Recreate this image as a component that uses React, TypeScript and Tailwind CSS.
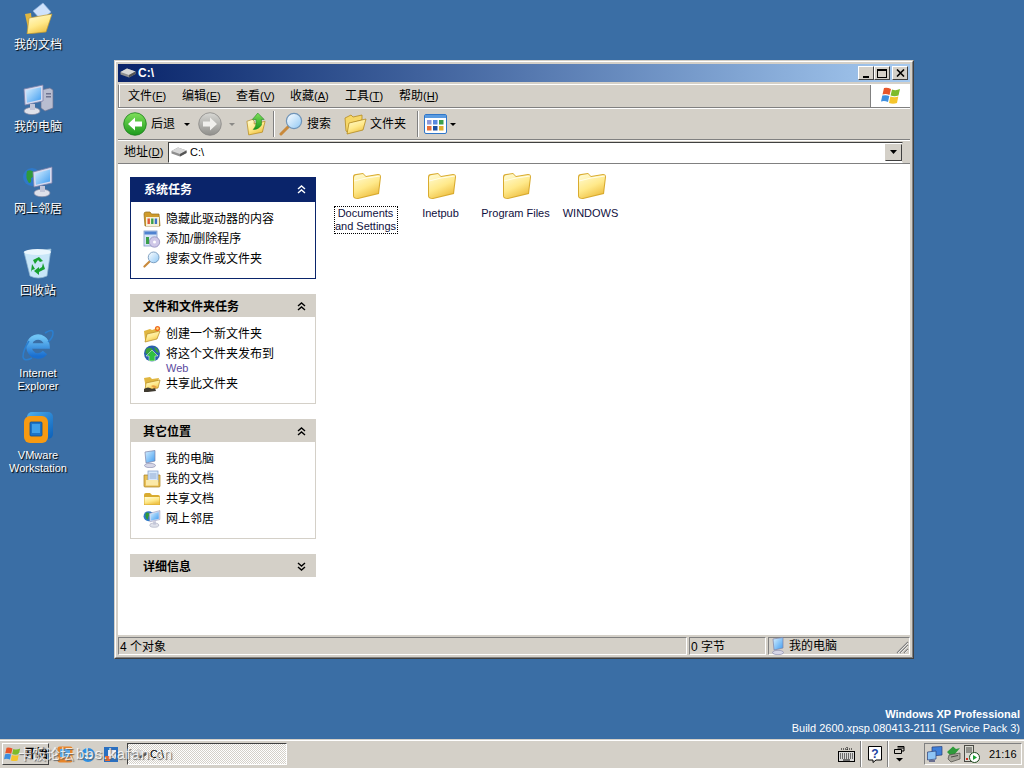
import React from 'react';

const cn = "font-['Liberation_Sans','Noto_Sans_CJK_SC',sans-serif]";

const Defs = () => (
  <svg className="absolute w-0 h-0">
    <defs>
      <linearGradient id="fold" x1="0" y1="0" x2="0.5" y2="1">
        <stop offset="0" stopColor="#fffcd8" />
        <stop offset="0.6" stopColor="#ffe98a" />
        <stop offset="1" stopColor="#f0c44a" />
      </linearGradient>
      <linearGradient id="green" x1="0" y1="0" x2="0" y2="1">
        <stop offset="0" stopColor="#7fe05a" />
        <stop offset="1" stopColor="#1c9a1c" />
      </linearGradient>
      <linearGradient id="gray" x1="0" y1="0" x2="0" y2="1">
        <stop offset="0" stopColor="#d8d8d4" />
        <stop offset="1" stopColor="#908f8b" />
      </linearGradient>
      <linearGradient id="screen" x1="0" y1="0" x2="1" y2="1">
        <stop offset="0" stopColor="#d8f0ff" />
        <stop offset="1" stopColor="#3f9cf0" />
      </linearGradient>
      <linearGradient id="lens" x1="0" y1="0" x2="1" y2="1">
        <stop offset="0" stopColor="#ffffff" />
        <stop offset="1" stopColor="#8fc8f5" />
      </linearGradient>
      <linearGradient id="vm" x1="0" y1="0" x2="1" y2="1">
        <stop offset="0" stopColor="#4fb0ee" />
        <stop offset="1" stopColor="#0b5fb8" />
      </linearGradient>
      <linearGradient id="ie" x1="0" y1="0" x2="0" y2="1">
        <stop offset="0" stopColor="#6fc4f5" />
        <stop offset="1" stopColor="#1a6fd0" />
      </linearGradient>
    </defs>
  </svg>
);

const Folder = ({ size = 32 }: { size?: number }) => (
  <svg width={size} height={size} viewBox="0 0 32 32">
    <path d="M3 8 Q3 5 6 5 L13 4 L16 7 L28 5 Q31 5 31 8 L29 25 L8 30 Q3 30 3 27 Z" fill="#d9ab2f" />
    <path d="M4 9 Q4 6 7 6 L13 5 L16 8 L28 6 Q30 6 30 8 L28 24 L8 29 Q4 29 4 27 Z" fill="url(#fold)" />
    <path d="M4 12 L16 9 L30 7" fill="none" stroke="#fffde8" strokeWidth="1" />
  </svg>
);

const OpenFolder = ({ size = 24 }: { size?: number }) => (
  <svg width={size} height={size} viewBox="0 0 24 24">
    <path d="M2 6 L8 3 L10 5 L19 3 L19 8 L8 11 L6 21 L3 19 Z" fill="#f6d768" stroke="#b48a20" strokeWidth="0.8" />
    <path d="M6 11 L23 7 L20 18 L4 22 Z" fill="url(#fold)" stroke="#b48a20" strokeWidth="0.8" />
  </svg>
);

const Drive = () => (
  <svg width="16" height="10" viewBox="0 0 16 10">
    <path d="M0.5 4 L7 0.5 L15.5 3.5 L15.5 6 L9 9.5 L0.5 6.5 Z" fill="#8f8f8f" />
    <path d="M0.5 4 L7 0.5 L15.5 3.5 L9 7 Z" fill="#d8d8d8" />
    <path d="M9 7 L15.5 3.5 L15.5 6 L9 9.5 Z" fill="#555555" />
  </svg>
);

const Nav = ({ on }: { on: boolean }) => (
  <svg width="24" height="24" viewBox="0 0 24 24">
    <circle cx="12" cy="12" r="11.3" fill={on ? 'url(#green)' : 'url(#gray)'} stroke={on ? '#1d7f1d' : '#8a8986'} strokeWidth="0.8" />
    {on ? (
      <path d="M5 12 L12 5.5 L12 9.5 L19 9.5 L19 14.5 L12 14.5 L12 18.5 Z" fill="#fff" />
    ) : (
      <path d="M19 12 L12 5.5 L12 9.5 L5 9.5 L5 14.5 L12 14.5 L12 18.5 Z" fill="#f0efec" />
    )}
  </svg>
);

const UpFolder = () => (
  <svg width="20" height="24" viewBox="0 0 22 26">
    <path d="M1 10 L7 8 L9 10 L9 13 L21 10 L18 22 L3 25 Z" fill="url(#fold)" stroke="#b48a20" strokeWidth="0.8" />
    <path d="M13 1 L20 8 L17 8 L17 14 Q14 19 8 19 Q12 15 11 8 L7 8 Z" fill="url(#green)" stroke="#1d7f1d" strokeWidth="0.6" />
  </svg>
);

const Lens = ({ size = 24 }: { size?: number }) => (
  <svg width={size} height={size} viewBox="0 0 24 24">
    <path d="M10 14 L2 22" stroke="#c98a3c" strokeWidth="3" strokeLinecap="round" />
    <circle cx="15" cy="9" r="7.6" fill="url(#lens)" stroke="#6f94b8" strokeWidth="1.2" />
  </svg>
);

const Views = () => (
  <svg width="23" height="20" viewBox="0 0 23 20">
    <rect x="0.5" y="0.5" width="22" height="19" rx="1.5" fill="#fff" stroke="#2f76c8" />
    <rect x="1" y="1" width="21" height="3" fill="#5a9be0" />
    {[['#8f9ad8', 3, 6], ['#5a8ae0', 9, 6], ['#3aa04a', 15, 6], ['#e8703a', 3, 12], ['#1c4fa0', 9, 12], ['#e0b030', 15, 12]].map(([c, x, y], i) => (
      <rect key={i} x={x as number} y={y as number} width="4.5" height="4.5" fill={c as string} />
    ))}
  </svg>
);

const Flag = ({ size = 20 }: { size?: number }) => (
  <svg width={size} height={size} viewBox="0 0 20 20">
    <path d="M3 2 Q6 1 10 3 L8.5 9 Q5 7.5 1.5 8.5 Z" fill="#e8562a" />
    <path d="M11 3.5 Q15 5 19 3 L17.5 9.5 Q13.5 11 9.6 9.5 Z" fill="#7dbb2a" />
    <path d="M1.3 9.6 Q5 8.5 8.3 10 L7 16 Q3.5 14.5 0 15.5 Z" fill="#3d8fe0" />
    <path d="M9.3 10.5 Q13.5 12 17.3 10.6 L16 17 Q12 18.5 8 17 Z" fill="#f5c52c" />
  </svg>
);

const Computer = ({ size = 32 }: { size?: number }) => (
  <svg width={size} height={size} viewBox="0 0 32 32">
    <path d="M19 6 L28 4 L31 6 L31 24 L23 27 L19 24 Z" fill="#b9bdd0" stroke="#6f7390" strokeWidth="0.7" />
    <rect x="24" y="9" width="5" height="1.5" fill="#6f7390" />
    <rect x="24" y="12" width="5" height="1.5" fill="#6f7390" />
    <path d="M2 5 L21 1 L21 17 L3 21 Z" fill="#d6dbf0" stroke="#7d82a8" strokeWidth="0.8" />
    <path d="M4 6.5 L19 3.2 L19 15.5 L5 18.8 Z" fill="url(#screen)" />
    <ellipse cx="10" cy="27" rx="8" ry="3.6" fill="#dfe1ea" stroke="#8286a0" strokeWidth="0.7" />
    <rect x="8" y="20" width="5" height="6" fill="#c3c6d8" />
  </svg>
);

const Network = ({ size = 32 }: { size?: number }) => (
  <svg width={size} height={size} viewBox="0 0 32 32">
    <circle cx="10" cy="11" r="9" fill="#2f79c9" />
    <path d="M5 5 Q10 3 12 7 Q13 11 9 12 Q10 17 7 17 Q3 12 5 5 Z" fill="#2f9a3a" />
    <path d="M11 6 L30 1 L30 17 L12 21 Z" fill="#d6dbf0" stroke="#7d82a8" strokeWidth="0.8" />
    <path d="M13 7.5 L28 3.5 L28 15.5 L14 18.8 Z" fill="url(#screen)" />
    <ellipse cx="20" cy="27" rx="8" ry="3.8" fill="#dfe1ea" stroke="#8286a0" strokeWidth="0.7" />
    <rect x="18" y="20" width="5" height="6" fill="#c3c6d8" />
  </svg>
);

const Recycle = () => (
  <svg width="30" height="32" viewBox="0 0 30 32">
    <path d="M1 4 L28 1 L24 28 Q15 32 7 28 Z" fill="#c8e6f8" stroke="#8fb4d0" strokeWidth="0.7" />
    <ellipse cx="14.5" cy="4" rx="13.5" ry="3" fill="#eaf6fd" />
    <path d="M10 12 L16 9 L20 13 L17 14 L15 12 L12 16 Z M20 15 L22 21 L16 24 L16 27 L11 23 L16 19 L16 21 L19 19 Z M9 16 L12 21 L9 22 L8 24 Z" fill="#18a030" />
  </svg>
);

const Ie = () => (
  <svg width="32" height="34" viewBox="0 0 32 34">
    <path d="M8 18 H25 A9 9.5 0 1 0 23 24.5" fill="none" stroke="url(#ie)" strokeWidth="5.5" />
    <path d="M23 5 Q31 0 31 5 Q31 10 26 14" fill="none" stroke="#2b7fd0" strokeWidth="1.5" />
    <path d="M7 13 Q1 22 1 29 Q2 34 10 30" fill="none" stroke="#2b7fd0" strokeWidth="1.5" />
  </svg>
);

const VMware = () => (
  <svg width="30" height="32" viewBox="0 0 30 32">
    <rect x="4" y="0" width="26" height="27" rx="5" fill="url(#vm)" />
    <rect x="1" y="4" width="24" height="27" rx="6" fill="#f79a12" />
    <rect x="7" y="10" width="12" height="14" rx="1" fill="#1d74c8" stroke="#0b4f98" strokeWidth="0.8" />
    <rect x="9" y="12" width="8" height="9" fill="#3fa0ea" />
  </svg>
);

const DocFolder = ({ size = 32 }: { size?: number }) => (
  <svg width={size} height={size} viewBox="0 0 32 32">
    <path d="M3 12 L9 11 L11 30 L7 31 Z" fill="#e0b640" />
    <path d="M11 9 L21 1 L29 10 L19 18 Z" fill="#cfe2fb" stroke="#8eb0dc" strokeWidth="0.7" />
    <path d="M7 16 L30 12 L24 30 L5 32 Z" fill="url(#fold)" stroke="#c09a30" strokeWidth="0.7" />
  </svg>
);

const DriveFolder = () => (
  <svg width="18" height="18" viewBox="0 0 18 18">
    <path d="M1 4 Q1 2 3 2 L7 2 L8.5 4 L16 4 L17 16 L2 16 Z" fill="#cf9b2c" stroke="#8f6b1a" strokeWidth="0.7" />
    <rect x="3" y="7" width="13" height="9" fill="#f6f1d8" />
    {['#e05a3a', '#3aa04a', '#3d72c8'].map((c, i) => (
      <rect key={i} x={4.5 + i * 3.6} y="8.5" width="2.4" height="5.5" fill={c} />
    ))}
  </svg>
);

const AddRemove = () => (
  <svg width="18" height="18" viewBox="0 0 18 18">
    <rect x="1" y="1" width="13" height="15" fill="#d7e4f7" stroke="#7f9ac8" strokeWidth="0.8" />
    <rect x="1.5" y="1.5" width="12" height="3" fill="#4f82d0" />
    <circle cx="11.5" cy="12" r="5.2" fill="#cfc8e8" stroke="#8a86b8" strokeWidth="0.7" />
    <circle cx="11.5" cy="12" r="1.5" fill="#fff" />
    <rect x="3" y="7" width="3" height="7" fill="#3aa04a" />
  </svg>
);

const NewFolder = () => (
  <svg width="18" height="18" viewBox="0 0 18 18">
    <path d="M1 6 L7 4 L9 5 L15 3 L15 7 L5 9 L3 16 L2 15 Z" fill="#e0b640" />
    <path d="M4 9 L17 6 L14 14 L2 17 Z" fill="url(#fold)" stroke="#b48a20" strokeWidth="0.7" />
    <circle cx="14.5" cy="3.5" r="2.6" fill="#f06a20" />
    <circle cx="14.5" cy="3.5" r="1.2" fill="#ffe080" />
  </svg>
);

const Publish = () => (
  <svg width="18" height="18" viewBox="0 0 18 18">
    <circle cx="9" cy="8.5" r="8" fill="#2a5fb0" />
    <path d="M3 4 Q8 1 10 5 Q9 8 6 8 Q4 10 2.5 8 Z M11 2 Q15 3 16 8 L13 7 Z" fill="#39a03c" />
    <path d="M9 5 L15 11 L12 11 L12 16 L6 16 L6 11 L3 11 Z" fill="#30c040" stroke="#fff" strokeWidth="0.5" />
  </svg>
);

const ShareFolder = () => (
  <svg width="18" height="18" viewBox="0 0 18 18">
    <path d="M1 3 L7 2 L9 4 L16 3 L15 7 L5 8 L3 13 Z" fill="#e0b640" />
    <path d="M3 8 L17 5 L15 13 L2 15 Z" fill="url(#fold)" stroke="#b48a20" strokeWidth="0.7" />
    <path d="M1 14 Q5 11 9 14 L12 13 L13 16 L5 17 L1 17 Z" fill="#3f3a30" />
    <path d="M8 11 Q11 9 14 12 L12 13.5 Z" fill="#e8a040" />
  </svg>
);

const SmallMachine = () => (
  <svg width="14" height="18" viewBox="0 0 14 18">
    <path d="M2 2 L12 0.5 L12 11 L3 13 Z" fill="url(#screen)" stroke="#7d82a8" strokeWidth="0.7" />
    <ellipse cx="7" cy="15.5" rx="5.5" ry="2.2" fill="#d6d6e6" stroke="#7d82a8" strokeWidth="0.6" />
  </svg>
);

const DocsSmall = () => (
  <svg width="18" height="18" viewBox="0 0 18 18">
    <path d="M1 5 L1 16 Q1 17 2 17 L16 17 Q17 17 17 16 L17 5 Z" fill="#e8bf55" stroke="#a87f20" strokeWidth="0.7" />
    <rect x="5" y="1" width="10" height="11" fill="#d8e8fb" stroke="#7f9ac8" strokeWidth="0.7" />
    <path d="M6.5 4 H13.5 M6.5 6 H13.5 M6.5 8 H13.5" stroke="#7f9ac8" strokeWidth="0.8" />
    <rect x="3" y="10" width="12" height="5.5" fill="#fbe9a8" />
  </svg>
);

const SharedSmall = () => (
  <svg width="18" height="18" viewBox="0 0 18 18">
    <path d="M1 5 Q1 3 3 3 L7 3 L9 5 L15 5 Q17 5 17 7 L17 15 L1 15 Z" fill="#d9ab2f" />
    <rect x="1.5" y="7" width="15" height="7.5" fill="url(#fold)" />
  </svg>
);

const Keyboard = () => (
  <svg width="17" height="15" viewBox="0 0 17 15">
    <path d="M9 0 V3 M3 2 H14" stroke="#000" strokeWidth="1" strokeDasharray="1 1" />
    <rect x="0.5" y="4.5" width="16" height="10" fill="#d8d8d8" stroke="#000" />
    <path d="M2 7 H15 M2 9 H15 M2 11 H15" stroke="#000" strokeWidth="1" strokeDasharray="1 1" />
    <path d="M5 13 H12" stroke="#000" />
  </svg>
);

const Help = () => (
  <svg width="16" height="17" viewBox="0 0 16 17">
    <path d="M1.5 0.5 H14.5 V14 H9 L6 16.5 V14 H1.5 Z" fill="#fff" stroke="#000" />
    <text x="8" y="11.5" fontSize="12" fontWeight="700" textAnchor="middle" fill="#1c3fa0" fontFamily="'Liberation Sans', sans-serif">?</text>
  </svg>
);

const Restore = () => (
  <svg width="11" height="16" viewBox="0 0 11 16">
    <path d="M3.5 0.5 H10 V5 H8 M0.5 3.5 H7.5 V7.5 H0.5 Z M3.5 2 H10" fill="none" stroke="#000" />
    <path d="M2 12 H9 L5.5 15.5 Z" fill="#000" />
  </svg>
);

const TrayNet = () => (
  <svg width="16" height="17" viewBox="0 0 16 17">
    <path d="M5 1 L15 0.5 L15 9 L5 10 Z" fill="#3f7fd8" stroke="#2a3f78" strokeWidth="0.7" />
    <path d="M0.5 6 L9 5 L9 13 L0.5 14 Z" fill="#8ec4f5" stroke="#2a3f78" strokeWidth="0.7" />
    <rect x="2" y="14" width="6" height="2" fill="#6a6f90" />
  </svg>
);

const TrayTool = () => (
  <svg width="15" height="17" viewBox="0 0 15 17">
    <path d="M1 6 L7 0.5 L10 3 L14 2 L9 8 L4 9 Z" fill="#2f9a3a" />
    <path d="M3 9 L14 7 L14 13 L5 16 L2 13 Z" fill="#a8a69c" stroke="#4a4a44" strokeWidth="0.7" />
    <path d="M5 11 L12 9.5" stroke="#4a4a44" />
  </svg>
);

const TrayServer = () => (
  <svg width="16" height="18" viewBox="0 0 16 18">
    <rect x="0.5" y="0.5" width="9" height="16" fill="#d8d8d0" stroke="#4a4a44" />
    <path d="M2 3 H8 M2 5 H8 M2 7 H8" stroke="#4a4a44" />
    <rect x="2" y="13" width="2" height="2" fill="#d03020" />
    <circle cx="10.5" cy="12.5" r="5" fill="#fff" stroke="#1c4a1c" />
    <path d="M9 10 L13 12.5 L9 15 Z" fill="#18a030" />
  </svg>
);

const QuickIcon = ({ kind }: { kind: string }) => {
  if (kind === 'a') {
    return (
      <svg width="16" height="17" viewBox="0 0 16 17">
        <rect x="0.5" y="0.5" width="15" height="16" rx="2" fill="#e8862a" />
        <rect x="3" y="3" width="10" height="8" fill="#5aa8e8" />
      </svg>
    );
  }
  if (kind === 'b') {
    return (
      <svg width="16" height="17" viewBox="0 0 16 17">
        <circle cx="8" cy="9" r="7" fill="#2d8fe3" />
        <path d="M4 8 H12 M5 11 Q8 14 12 11" stroke="#fff" strokeWidth="1.6" fill="none" />
      </svg>
    );
  }
  return (
    <svg width="16" height="17" viewBox="0 0 16 17">
      <rect x="1" y="1" width="14" height="15" fill="#2a6fc0" />
      <rect x="5" y="4" width="8" height="8" fill="#e8e8f0" />
      <rect x="2" y="10" width="5" height="5" fill="#e86a30" />
    </svg>
  );
};

const Chevrons = ({ down }: { down?: boolean }) => (
  <svg width="9" height="9" viewBox="0 0 9 9" className={down ? 'rotate-180' : ''}>
    <path d="M1 4 L4.5 1 L8 4 M1 8 L4.5 5 L8 8" fill="none" stroke="currentColor" strokeWidth="1.4" />
  </svg>
);

const Key = ({ label, k }: { label: string; k: string }) => (
  <span>
    {label}
    <span className="text-[11px]">
      (<u>{k}</u>)
    </span>
  </span>
);

const desktopIcons = [
  { lines: ['我的文档'], icon: <DocFolder /> },
  { lines: ['我的电脑'], icon: <Computer /> },
  { lines: ['网上邻居'], icon: <Network /> },
  { lines: ['回收站'], icon: <Recycle /> },
  { lines: ['Internet', 'Explorer'], icon: <Ie /> },
  { lines: ['VMware', 'Workstation'], icon: <VMware /> },
];

const menus = [
  ['文件', 'F', 'w-[54px]'],
  ['编辑', 'E', 'w-[54px]'],
  ['查看', 'V', 'w-[54px]'],
  ['收藏', 'A', 'w-[55px]'],
  ['工具', 'T', 'w-[54px]'],
  ['帮助', 'H', 'w-[54px]'],
];

const folders = ['Documents and Settings', 'Inetpub', 'Program Files', 'WINDOWS'];

const DesktopIcon = ({ lines, icon }: { lines: string[]; icon: React.ReactNode }) => (
  <div className="h-[82px] w-[76px] flex flex-col items-center">
    <div className="h-[34px] flex items-end">{icon}</div>
    <div
      className={`mt-[4px] text-white leading-[13px] text-center pt-[1px] [text-shadow:1px_1px_1px_#000] ${
        lines.length > 1 ? 'text-[11px]' : 'text-[12px]'
      }`}
    >
      {lines.map((l) => (
        <div key={l}>{l}</div>
      ))}
    </div>
  </div>
);

const TaskPane = ({
  title,
  primary,
  body,
  down,
  children,
}: {
  title: string;
  primary?: boolean;
  body?: string;
  down?: boolean;
  children?: React.ReactNode;
}) => (
  <div className="w-[186px]">
    <div
      className={`flex items-center justify-between pr-[10px] text-[12px] font-bold ${
        primary ? 'pl-[14px] h-[25px] bg-[#0a246a] text-white' : 'pl-[13px] pt-[2px] h-[23px] bg-[#d4d0c8] text-black'
      }`}
    >
      <span>{title}</span>
      <Chevrons down={down} />
    </div>
    {children && (
      <div
        className={`${body} border border-t-0 bg-white flex flex-col pl-[12px] ${
          primary ? 'border-[#0a246a]' : 'border-[#d4d0c8]'
        }`}
      >
        {children}
      </div>
    )}
  </div>
);

const TaskRow = ({ icon, text, sub }: { icon: React.ReactNode; text: string; sub?: string }) => (
  <div className="flex text-[12px] leading-[20px] text-black">
    <div className="w-[23px] h-[20px] flex items-center">{icon}</div>
    <div>
      <div>{text}</div>
      {sub && <div className="text-[11px] leading-[10px] -mt-[1px] pb-[1px] text-[#5b4a9e]">{sub}</div>}
    </div>
  </div>
);

const Sep = () => <div className="w-[2px] h-[26px] border-l border-r border-l-[#808080] border-r-white" />;

export default function App() {
  return (
    <div className={`${cn} w-[1024px] h-[768px] overflow-hidden flex flex-col bg-[#3a6ea5] select-none`}>
      <Defs />
      <div className="relative flex-1">
        <div className="flex flex-col">
          {desktopIcons.map((d) => (
            <DesktopIcon key={d.lines[0]} {...d} />
          ))}
        </div>

        {/* explorer window */}
        <div className="absolute left-[114px] top-[60px] w-[800px] h-[599px] border border-[#d4d0c8] border-r-[#404040] border-b-[#404040]">
          <div className="w-full h-full border border-white border-r-[#808080] border-b-[#808080] bg-[#d4d0c8] p-[2px] flex flex-col">
            <div className="h-[18px] shrink-0 flex items-center justify-between pl-[2px] pr-[2px] bg-gradient-to-r from-[#0a246a] to-[#a6caf0]">
              <div className="flex items-center gap-[2px] text-white text-[12px] font-bold">
                <Drive />
                <span>C:\</span>
              </div>
              <div className="flex">
                <div className="w-[16px] h-[14px] bg-[#d4d0c8] border border-white border-r-[#404040] border-b-[#404040] flex items-end justify-center pb-[1px]">
                  <div className="w-[6px] h-[2px] bg-black" />
                </div>
                <div className="w-[16px] h-[14px] bg-[#d4d0c8] border border-white border-r-[#404040] border-b-[#404040] flex items-center justify-center">
                  <div className="w-[10px] h-[9px] border border-black border-t-2" />
                </div>
                <div className="ml-[2px] w-[16px] h-[14px] bg-[#d4d0c8] border border-white border-r-[#404040] border-b-[#404040] flex items-center justify-center">
                  <svg width="9" height="8" viewBox="0 0 9 8">
                    <path d="M1 0.5 L8 7.5 M8 0.5 L1 7.5" stroke="#000" strokeWidth="1.6" />
                  </svg>
                </div>
              </div>
            </div>

            {/* menu bar */}
            <div className="mt-[2px] h-[24px] shrink-0 flex border-t border-t-white border-b border-b-[#808080] border-l border-l-[#808080]">
              <div className="flex-1 flex items-center pl-[8px] text-[12px] text-black border-l border-l-white">
                {menus.map(([label, k, w]) => (
                  <div key={k} className={w}>
                    <Key label={label} k={k} />
                  </div>
                ))}
              </div>
              <div className="w-[40px] bg-white border-l border-l-[#808080] flex items-center justify-center">
                <Flag />
              </div>
            </div>

            {/* toolbar */}
            <div className="h-[32px] shrink-0 flex items-center pl-[5px] border-t border-t-white border-b border-b-[#808080] text-[12px] text-black">
              <Nav on />
              <span className="ml-[4px]">后退</span>
              <svg className="ml-[9px]" width="6" height="3" viewBox="0 0 6 3"><path d="M0 0 H6 L3 3 Z" fill="#000" /></svg>
              <div className="ml-[8px]"><Nav on={false} /></div>
              <svg className="ml-[7px]" width="6" height="3" viewBox="0 0 6 3"><path d="M0 0 H6 L3 3 Z" fill="#8a8986" /></svg>
              <div className="ml-[11px]"><UpFolder /></div>
              <div className="ml-[7px]"><Sep /></div>
              <div className="ml-[4px]"><Lens /></div>
              <span className="ml-[4px]">搜索</span>
              <div className="ml-[12px]"><OpenFolder /></div>
              <span className="ml-[3px]">文件夹</span>
              <div className="ml-[11px]"><Sep /></div>
              <div className="ml-[5px]"><Views /></div>
              <svg className="ml-[3px]" width="6" height="3" viewBox="0 0 6 3"><path d="M0 0 H6 L3 3 Z" fill="#000" /></svg>
            </div>

            {/* address bar */}
            <div className="h-[24px] shrink-0 flex items-center pl-[6px] pr-[7px] border-t border-t-white border-b border-b-[#808080] text-[12px] text-black">
              <span className="w-[44px]"><Key label="地址" k="D" /></span>
              <div className="flex-1 h-[21px] flex items-center bg-white border border-[#808080] border-t-[#404040] border-l-[#404040] border-r-[#d4d0c8] border-b-white pl-[2px]">
                <Drive />
                <span className="ml-[3px] text-[11px]">C:\</span>
                <div className="ml-auto w-[17px] h-[17px] bg-[#d4d0c8] border border-[#d4d0c8] border-r-[#404040] border-b-[#404040] flex items-center justify-center">
                  <svg width="7" height="4" viewBox="0 0 7 4"><path d="M0 0 H7 L3.5 4 Z" fill="#000" /></svg>
                </div>
              </div>
            </div>

            {/* content */}
            <div className="flex-1 min-h-0 flex bg-white">
              <div className="w-[210px] shrink-0 pl-[12px] pt-[13px] flex flex-col gap-[15px]">
                <TaskPane title="系统任务" primary body="h-[77px] pt-[7px]">
                  <TaskRow icon={<DriveFolder />} text="隐藏此驱动器的内容" />
                  <TaskRow icon={<AddRemove />} text="添加/删除程序" />
                  <TaskRow icon={<Lens size={17} />} text="搜索文件或文件夹" />
                </TaskPane>
                <TaskPane title="文件和文件夹任务" body="h-[87px] pt-[7px]">
                  <TaskRow icon={<NewFolder />} text="创建一个新文件夹" />
                  <TaskRow icon={<Publish />} text="将这个文件夹发布到" sub="Web" />
                  <TaskRow icon={<ShareFolder />} text="共享此文件夹" />
                </TaskPane>
                <TaskPane title="其它位置" body="h-[97px] pt-[7px]">
                  <TaskRow icon={<SmallMachine />} text="我的电脑" />
                  <TaskRow icon={<DocsSmall />} text="我的文档" />
                  <TaskRow icon={<SharedSmall />} text="共享文档" />
                  <TaskRow icon={<Network size={18} />} text="网上邻居" />
                </TaskPane>
                <TaskPane title="详细信息" down />
              </div>
              <div className="flex pt-[5px] items-start">
                {folders.map((f, i) => (
                  <div key={f} className="w-[75px] flex flex-col items-center">
                    <Folder />
                    <div
                      className={`mt-[5px] text-[11px] leading-[13px] text-center text-[#101040] ${
                        i === 0 ? 'w-[64px] border border-dotted border-black' : 'w-[72px] border border-transparent'
                      }`}
                    >
                      {f}
                    </div>
                  </div>
                ))}
              </div>
            </div>

            {/* status bar */}
            <div className="h-[20px] shrink-0 flex gap-[2px] pt-[2px] text-[12px] text-black leading-[18px]">
              <div className="flex-1 border border-[#808080] border-r-white border-b-white pl-[1px]">4 个对象</div>
              <div className="w-[77px] border border-[#808080] border-r-white border-b-white pl-[1px]">0 字节</div>
              <div className="relative w-[142px] border border-[#808080] border-r-white border-b-white pl-[2px] flex items-center gap-[4px]">
                <SmallMachine />
                <span>我的电脑</span>
                <svg className="absolute right-0 bottom-0" width="13" height="13" viewBox="0 0 13 13">
                  <path d="M12 1 L1 12 M12 4 L4 12 M12 8 L8 12" stroke="#808080" strokeWidth="1.2" />
                  <path d="M12 2 L2 12 M12 5 L5 12 M12 9 L9 12" stroke="#fff" strokeWidth="0.7" />
                </svg>
              </div>
            </div>
          </div>
        </div>

        <div className="absolute right-[4px] bottom-[4px] text-right text-white text-[11px] leading-[14px]">
          <div className="font-bold">Windows XP Professional</div>
          <div>Build 2600.xpsp.080413-2111 (Service Pack 3)</div>
        </div>
      </div>

      {/* taskbar */}
      <div className="relative h-[29px] shrink-0 bg-[#d4d0c8] border-t border-t-[#d4d0c8] shadow-[inset_0_1px_0_#fff] flex items-center pl-[2px] pr-[2px] text-[12px] text-black">
        <div className="w-[47px] h-[22px] border border-white border-r-[#404040] border-b-[#404040] flex items-center gap-[3px] pl-[1px] font-bold">
          <Flag size={17} />
          <span>开始</span>
        </div>
        <div className="ml-[8px] flex gap-[7px]">
          <QuickIcon kind="a" />
          <QuickIcon kind="b" />
          <QuickIcon kind="c" />
        </div>
        <div className="ml-[8px] w-[160px] h-[22px] border border-[#404040] border-r-white border-b-white flex items-center pl-[3px] gap-[3px] bg-[repeating-conic-gradient(#ffffff_0%_25%,#d4d0c8_0%_50%)] bg-[length:2px_2px]">
          <Drive />
          <span className="text-[11px]">C:\</span>
        </div>

        <div className="absolute left-[18px] top-[4px] text-[14px] leading-[20px] text-white/80 [text-shadow:1px_1px_1px_#666] flex">
          <span>卡饭论坛</span>
          <span className="ml-[2px] text-[15px] tracking-[1px]">bbs.kafan.cn</span>
        </div>

        <div className="ml-auto flex items-center">
          <Keyboard />
          <div className="ml-[5px]"><Sep /></div>
          <div className="ml-[5px]"><Help /></div>
          <div className="ml-[4px]"><Sep /></div>
          <div className="ml-[5px]"><Restore /></div>
          <div className="ml-[19px] w-[98px] h-[22px] border border-[#808080] border-r-white border-b-white flex items-center pl-[2px] gap-[3px]">
            <TrayNet />
            <TrayTool />
            <TrayServer />
            <span className="ml-[6px] text-[11px]">21:16</span>
          </div>
        </div>
      </div>
    </div>
  );
}
